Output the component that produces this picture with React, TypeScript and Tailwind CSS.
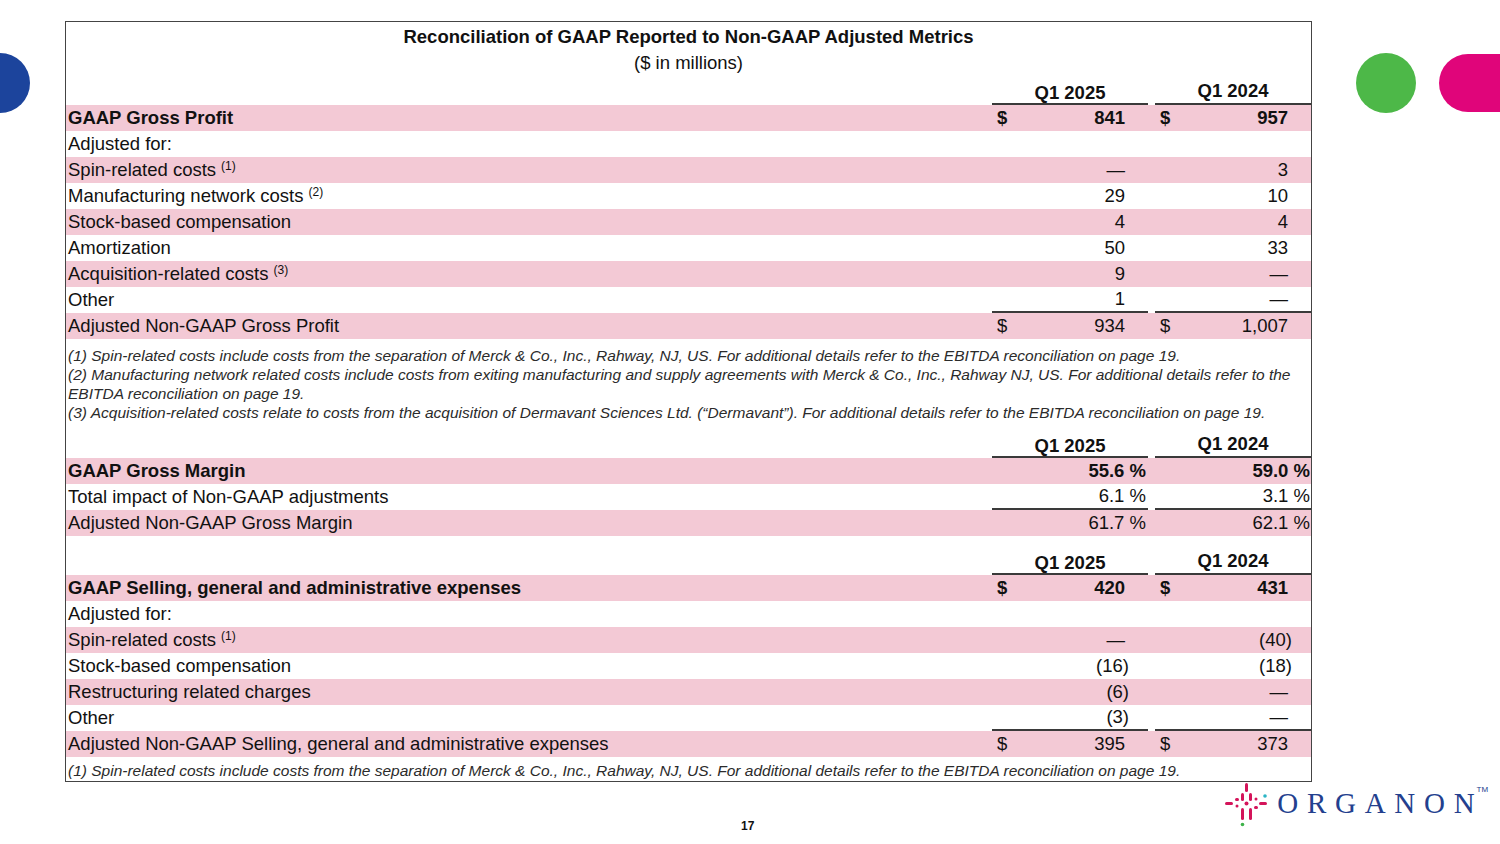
import React from "react";

type RowProps = {
  label: string;
  sup?: string;
  bold?: boolean;
  pink?: boolean;
  v1?: string;
  v2?: string;
  dollar?: boolean;
  pct?: boolean;
  underline?: boolean;
};

function ValueCell({ value, dollar, pct, underline, first }: { value?: string; dollar?: boolean; pct?: boolean; underline?: boolean; first?: boolean }) {
  const paren = value?.endsWith(")");
  const pr = pct ? (first ? "pr-[2px]" : "pr-[1px]") : paren ? "pr-[19px]" : "pr-[23px]";
  return (
    <div className={`flex h-full w-[156px] items-center ${underline ? "border-b-2 border-[#3a3a3a]" : ""}`}>
      {dollar && <span className="pl-[5px]">$</span>}
      <span className={`ml-auto ${pr}`}>{value}</span>
    </div>
  );
}

function Row({ label, sup, bold, pink, v1, v2, dollar, pct, underline }: RowProps) {
  return (
    <div className={`flex h-[26px] items-center ${pink ? "bg-[#f3c9d5]" : ""} ${bold ? "font-bold" : ""}`}>
      <div className="flex-1 pl-[2px] whitespace-nowrap">
        {label}
        {sup && <sup className="ml-[5px] text-[12px] font-normal">{sup}</sup>}
      </div>
      <ValueCell value={v1} dollar={dollar} pct={pct} underline={underline} first />
      <div className="w-[7px]" />
      <ValueCell value={v2} dollar={dollar} pct={pct} underline={underline} />
    </div>
  );
}

function HeaderRow({ h }: { h: string }) {
  return (
    <div className={`flex ${h} items-end font-bold`}>
      <div className="flex-1" />
      <div className="w-[156px] border-b-2 border-[#3a3a3a] text-center leading-[20px]">Q1 2025</div>
      <div className="w-[7px]" />
      <div className="w-[156px] border-b-2 border-[#3a3a3a] pb-[2px] text-center leading-[20px]">Q1 2024</div>
    </div>
  );
}

function Footnote({ children }: { children: React.ReactNode }) {
  return <p className="text-[15.5px] italic leading-[19px] text-[#2b2b2b]">{children}</p>;
}

function OrganonMark() {
  return (
    <svg width="44" height="46" viewBox="0 0 44 46">
      <g fill="#d4145a">
        <rect x="20" y="1" width="3" height="9" rx="1.5" />
        <rect x="0" y="20" width="8" height="3" rx="1.5" />
        <rect x="34" y="20" width="8" height="3" rx="1.5" />
        <rect x="16" y="11" width="3" height="8" rx="1.5" />
        <rect x="24" y="11" width="3" height="8" rx="1.5" />
        <rect x="10" y="16" width="4" height="3" rx="1.5" />
        <rect x="29" y="24" width="4" height="3" rx="1.5" />
        <rect x="16" y="26" width="3" height="12" rx="1.5" />
        <rect x="24" y="26" width="3" height="12" rx="1.5" />
        <circle cx="21.5" cy="21.5" r="2" />
        <circle cx="12" cy="24" r="1.5" />
        <circle cx="31" cy="17" r="1.5" />
      </g>
      <circle cx="40" cy="14" r="1.8" fill="#2bb5c5" />
      <circle cx="17.5" cy="42.5" r="1.8" fill="#3db34a" />
    </svg>
  );
}

export default function App() {
  return (
    <div className="h-[844px] w-[1500px] overflow-hidden bg-white font-['Liberation_Sans',Arial,sans-serif] text-[18.5px] text-[#111]">
      <div className="flex">
        <div className="mt-[53px] h-[60px] w-[30px] rounded-r-full bg-[#1c449c]" />

        <div className="ml-[35px] mt-[21px] w-[1247px] border border-[#444]">
          <div className="pt-[3px] text-center">
            <div className="text-[18.5px] font-bold leading-[24px]">Reconciliation of GAAP Reported to Non-GAAP Adjusted Metrics</div>
            <div className="leading-[28px]">($ in millions)</div>
          </div>
          <HeaderRow h="h-[28px]" />
          <Row label="GAAP Gross Profit" bold pink dollar v1="841" v2="957" />
          <Row label="Adjusted for:" />
          <Row label="Spin-related costs" sup="(1)" pink v1="—" v2="3" />
          <Row label="Manufacturing network costs" sup="(2)" v1="29" v2="10" />
          <Row label="Stock-based compensation" pink v1="4" v2="4" />
          <Row label="Amortization" v1="50" v2="33" />
          <Row label="Acquisition-related costs" sup="(3)" pink v1="9" v2="—" />
          <Row label="Other" v1="1" v2="—" underline />
          <Row label="Adjusted Non-GAAP Gross Profit" pink dollar v1="934" v2="1,007" />

          <div className="pl-[2px] pt-[7px] pb-[10px]">
            <Footnote>(1) Spin-related costs include costs from the separation of Merck &amp; Co., Inc., Rahway, NJ, US. For additional details refer to the EBITDA reconciliation on page 19.</Footnote>
            <Footnote>(2) Manufacturing network related costs include costs from exiting manufacturing and supply agreements with Merck &amp; Co., Inc., Rahway NJ, US. For additional details refer to the EBITDA reconciliation on page 19.</Footnote>
            <Footnote>(3) Acquisition-related costs relate to costs from the acquisition of Dermavant Sciences Ltd. (“Dermavant”). For additional details refer to the EBITDA reconciliation on page 19.</Footnote>
          </div>

          <HeaderRow h="h-[26px]" />
          <Row label="GAAP Gross Margin" bold pink pct v1="55.6 %" v2="59.0 %" />
          <Row label="Total impact of Non-GAAP adjustments" pct v1="6.1 %" v2="3.1 %" underline />
          <Row label="Adjusted Non-GAAP Gross Margin" pink pct v1="61.7 %" v2="62.1 %" />

          <HeaderRow h="h-[39px]" />
          <Row label="GAAP Selling, general and administrative expenses" bold pink dollar v1="420" v2="431" />
          <Row label="Adjusted for:" />
          <Row label="Spin-related costs" sup="(1)" pink v1="—" v2="(40)" />
          <Row label="Stock-based compensation" v1="(16)" v2="(18)" />
          <Row label="Restructuring related charges" pink v1="(6)" v2="—" />
          <Row label="Other" v1="(3)" v2="—" underline />
          <Row label="Adjusted Non-GAAP Selling, general and administrative expenses" pink dollar v1="395" v2="373" />

          <div className="pl-[2px] pt-[4px] pb-[1px]">
            <Footnote>(1) Spin-related costs include costs from the separation of Merck &amp; Co., Inc., Rahway, NJ, US. For additional details refer to the EBITDA reconciliation on page 19.</Footnote>
          </div>
        </div>

        <div className="ml-[44px] mt-[53px] h-[60px] w-[60px] rounded-full bg-[#4db848]" />
        <div className="ml-[23px] mt-[54px] h-[58px] w-[61px] rounded-l-full bg-[#e0057a]" />
      </div>

      <div className="flex items-start">
        <div className="ml-[741px] mt-[37px] text-[12px] font-bold leading-[14px]">17</div>
        <div className="ml-[471px] mt-[0px] flex items-start">
          <OrganonMark />
          <div className="ml-[8px] mt-[5px] font-['Liberation_Serif',serif] text-[29px] leading-[32px] text-[#23408e]">
            <span className="tracking-[0.3em]">ORGANO</span>N
          </div>
          <div className="ml-[2px] mt-[3px] font-['Liberation_Sans',sans-serif] text-[8px] leading-[10px] text-[#23408e]">TM</div>
        </div>
      </div>
    </div>
  );
}
